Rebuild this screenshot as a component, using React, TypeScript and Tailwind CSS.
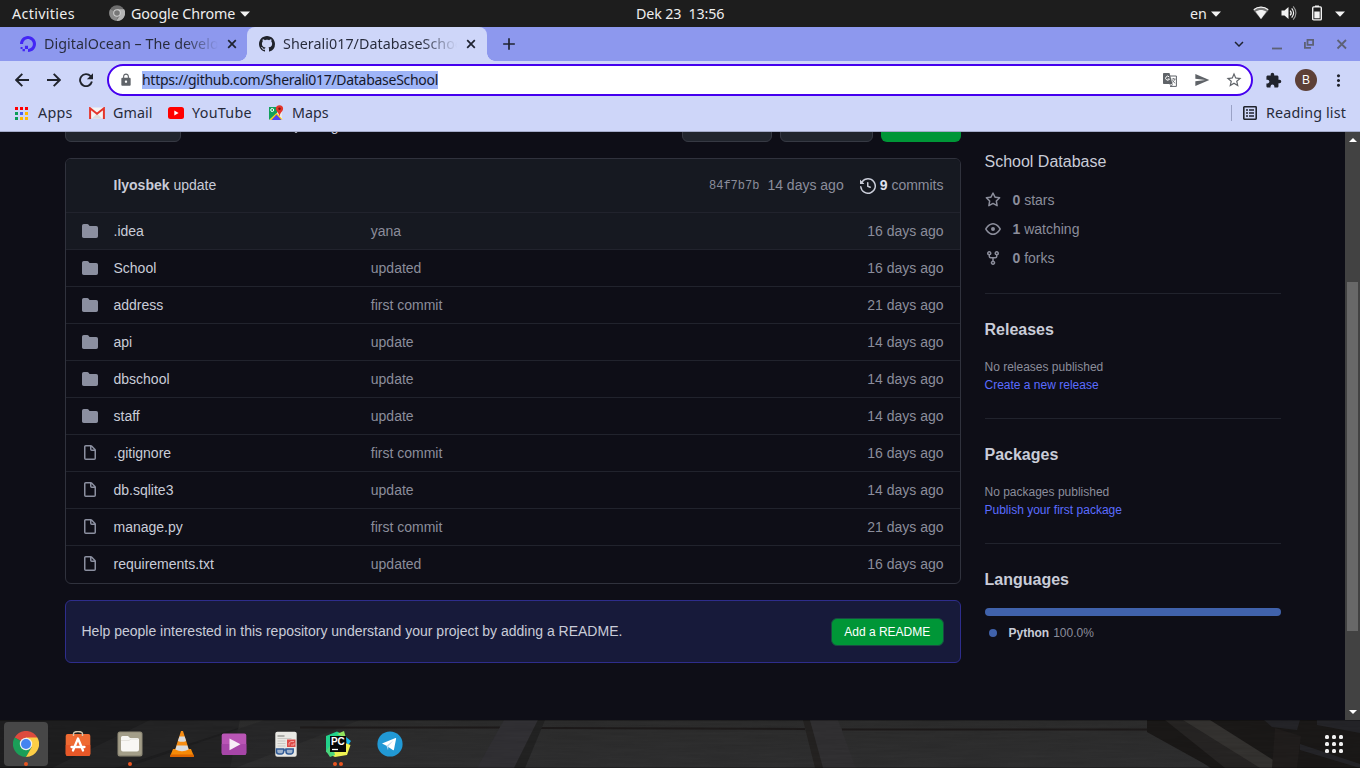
import type { ReactNode } from 'react';
import { MdAdd, MdExpandMore, MdExtension, MdLock, MdMoreVert, MdSend, MdStarBorder } from 'react-icons/md';
import { SiDigitalocean } from 'react-icons/si';

const octicons = {
  folder:
    'M1.75 1A1.75 1.75 0 000 2.75v10.5C0 14.216.784 15 1.75 15h12.5A1.75 1.75 0 0016 13.25v-8.5A1.75 1.75 0 0014.25 3h-6.5a.25.25 0 01-.2-.1l-.9-1.2c-.33-.44-.85-.7-1.4-.7h-3.5z',
  file: 'M3.75 1.5a.25.25 0 00-.25.25v11.5c0 .138.112.25.25.25h8.5a.25.25 0 00.25-.25V6H9.75A1.75 1.75 0 018 4.25V1.5H3.75zm5.75.56v2.19c0 .138.112.25.25.25h2.19L9.5 2.06zM2 1.75C2 .784 2.784 0 3.75 0h5.086c.464 0 .909.184 1.237.513l3.414 3.414c.329.328.513.773.513 1.237v8.086A1.75 1.75 0 0112.25 15h-8.5A1.75 1.75 0 012 13.25V1.75z',
  history:
    'M1.643 3.143L.427 1.927A.25.25 0 000 2.104V5.75c0 .138.112.25.25.25h3.646a.25.25 0 00.177-.427L2.715 4.215a6.5 6.5 0 11-1.18 4.458.75.75 0 10-1.493.154 8.001 8.001 0 101.6-5.684zM7.75 4a.75.75 0 01.75.75v2.992l2.028.812a.75.75 0 01-.557 1.392l-2.5-1A.75.75 0 017 8.25v-3.5A.75.75 0 017.75 4z',
  star: 'M8 .25a.75.75 0 01.673.418l1.882 3.815 4.21.612a.75.75 0 01.416 1.279l-3.046 2.97.719 4.192a.75.75 0 01-1.088.791L8 12.347l-3.766 1.98a.75.75 0 01-1.088-.79l.72-4.194L.818 6.374a.75.75 0 01.416-1.28l4.21-.611L7.327.668A.75.75 0 018 .25zm0 2.445L6.615 5.5a.75.75 0 01-.564.41l-3.097.45 2.24 2.184a.75.75 0 01.216.664l-.528 3.084 2.769-1.456a.75.75 0 01.698 0l2.77 1.456-.53-3.084a.75.75 0 01.216-.664l2.24-2.183-3.096-.45a.75.75 0 01-.564-.41L8 2.694v.001z',
  eye: 'M1.679 7.932c.412-.621 1.242-1.75 2.366-2.717C5.175 4.242 6.527 3.5 8 3.5c1.473 0 2.824.742 3.955 1.715 1.124.967 1.954 2.096 2.366 2.717a.119.119 0 010 .136c-.412.621-1.242 1.75-2.366 2.717C10.825 11.758 9.473 12.5 8 12.5c-1.473 0-2.824-.742-3.955-1.715C2.92 9.818 2.09 8.69 1.679 8.068a.119.119 0 010-.136zM8 2c-1.981 0-3.67.992-4.933 2.078C1.797 5.169.88 6.423.43 7.1a1.619 1.619 0 000 1.798c.45.678 1.367 1.932 2.637 3.024C4.329 13.008 6.019 14 8 14c1.981 0 3.67-.992 4.933-2.078 1.27-1.091 2.187-2.345 2.637-3.023a1.619 1.619 0 000-1.798c-.45-.678-1.367-1.932-2.637-3.023C11.671 2.992 9.981 2 8 2zm0 8a2 2 0 100-4 2 2 0 000 4z',
  fork: 'M5 3.25a.75.75 0 11-1.5 0 .75.75 0 011.5 0zm0 2.122a2.25 2.25 0 10-1.5 0v.878A2.25 2.25 0 005.75 8.5h1.5v2.128a2.251 2.251 0 101.5 0V8.5h1.5a2.25 2.25 0 002.25-2.25v-.878a2.25 2.25 0 10-1.5 0v.878a.75.75 0 01-.75.75h-4.5A.75.75 0 015 6.25v-.878zm3.75 7.378a.75.75 0 11-1.5 0 .75.75 0 011.5 0zm3-8.75a.75.75 0 100-1.5.75.75 0 000 1.5z',
  branch:
    'M11.75 2.5a.75.75 0 100 1.5.75.75 0 000-1.5zm-2.25.75a2.25 2.25 0 113 2.122V6A2.5 2.5 0 0110 8.5H6a1 1 0 00-1 1v1.128a2.251 2.251 0 11-1.5 0V5.372a2.25 2.25 0 111.5 0v1.836A2.492 2.492 0 016 7h4a1 1 0 001-1v-.628A2.25 2.25 0 019.5 3.25zM4.25 12a.75.75 0 100 1.5.75.75 0 000-1.5zM3.5 3.25a.75.75 0 111.5 0 .75.75 0 01-1.5 0z',
  tag: 'M2.5 7.775V2.75a.25.25 0 01.25-.25h5.025a.25.25 0 01.177.073l6.25 6.25a.25.25 0 010 .354l-5.025 5.025a.25.25 0 01-.354 0l-6.25-6.25a.25.25 0 01-.073-.177zm-1.5 0V2.75C1 1.784 1.784 1 2.75 1h5.025c.464 0 .91.184 1.238.513l6.25 6.25a1.75 1.75 0 010 2.474l-5.026 5.026a1.75 1.75 0 01-2.474 0l-6.25-6.25A1.75 1.75 0 011 7.775zM6 5a1 1 0 100 2 1 1 0 000-2z',
  mark: 'M8 0C3.58 0 0 3.58 0 8c0 3.54 2.29 6.53 5.47 7.59.4.07.55-.17.55-.38 0-.19-.01-.82-.01-1.49-2.01.37-2.53-.49-2.69-.94-.09-.23-.48-.94-.82-1.13-.28-.15-.68-.52-.01-.53.63-.01 1.08.58 1.23.82.72 1.21 1.87.87 2.33.66.07-.52.28-.87.51-1.07-1.78-.2-3.64-.89-3.64-3.95 0-.87.31-1.59.82-2.15-.08-.2-.36-1.02.08-2.12 0 0 .67-.21 2.2.82.64-.18 1.32-.27 2-.27.68 0 1.36.09 2 .27 1.53-1.04 2.2-.82 2.2-.82.44 1.1.16 1.92.08 2.12.51.56.82 1.27.82 2.15 0 3.07-1.87 3.75-3.65 3.95.29.25.54.73.54 1.48 0 1.07-.01 1.93-.01 2.2 0 .21.15.46.55.38A8.013 8.013 0 0016 8c0-4.42-3.58-8-8-8z',
};

function Octicon({ name, className = '' }: { name: keyof typeof octicons; className?: string }) {
  return (
    <svg viewBox="0 0 16 16" width="16" height="16" fill="currentColor" className={`shrink-0 ${className}`}>
      <path fillRule="evenodd" d={octicons[name]} />
    </svg>
  );
}

function Caret({ className = '' }: { className?: string }) {
  return (
    <svg viewBox="0 0 10 6" width="10" height="6" className={`shrink-0 ${className}`}>
      <path d="M0 .5h10L5 5.7z" fill="#f2f2f2" />
    </svg>
  );
}

function TopBar() {
  return (
    <div className="flex h-[27px] items-center bg-[#1d1d1d] pl-3 text-[14.3px] text-[#eeeeee]">
      <span className="w-[97px] whitespace-nowrap tracking-[0.33px]">Activities</span>
      <svg viewBox="0 0 16 16" width="16" height="16" className="-mt-px shrink-0">
        <circle cx="8" cy="8" r="7.8" fill="#6e6e6e" />
        <path d="M8 4.2h7.1A7.8 7.8 0 0 1 7.3 15.8L11.3 9.9z" fill="#b4b4b4" />
        <path d="M8 8 1.2 4.3A7.8 7.8 0 0 0 7.3 15.8L9 11z" fill="#8a8a8a" />
        <circle cx="8" cy="8" r="3.8" fill="#d0d0d0" />
        <circle cx="8" cy="8" r="2.8" fill="#777777" />
      </svg>
      <span className="ml-[6px] w-[109px] whitespace-nowrap tracking-[-0.1px]">Google Chrome</span>
      <Caret />
      <span className="ml-[386px] w-[554px] whitespace-pre tracking-[-0.15px]">Dek 23  13:56</span>
      <span className="w-[21px]">en</span>
      <Caret />
      <svg viewBox="0 0 16 14" width="16" height="14" className="-mt-px ml-8 shrink-0">
        <path d="M.3 3.9C4.700-.2 11.300-.2 15.700 3.900L8 13.200z" fill="#777" />
        <path d="M.8 3.700C5 .2 11 .2 15.200 3.700" fill="none" stroke="#f2f2f2" strokeWidth="1.300" />
        <path d="M2.600 5.600c3.400-2.200 7.400-2.200 10.800 0L8 13z" fill="#f2f2f2" />
      </svg>
      <svg viewBox="0 0 16 16" width="16" height="16" className="-mt-px ml-3 shrink-0">
        <path d="M.5 5.500h3L7.500 2v12l-4-3.500h-3z" fill="#f2f2f2" />
        <path d="M9.200 5.600q2 2.400 0 4.800" fill="none" stroke="#f2f2f2" strokeWidth="1.300" />
        <path d="M10.700 3.400q3.800 4.600 0 9.200" fill="none" stroke="#f2f2f2" strokeWidth="1.200" />
        <path d="M12.200 1.300q5.400 6.700 0 13.400" fill="none" stroke="#999" strokeWidth="1.100" />
      </svg>
      <svg viewBox="0 0 10 16" width="10" height="16" className="-mt-0.5 ml-[15px] shrink-0">
        <path d="M3 .5h4V2H3z" fill="#f2f2f2" />
        <rect x=".7" y="1.900" width="8.600" height="13" rx="1" fill="none" stroke="#f2f2f2" strokeWidth="1.400" />
        <path d="M2.300 6.500h5.400v6.800H2.300z" fill="#f2f2f2" />
      </svg>
      <Caret className="ml-[13px]" />
    </div>
  );
}

const tabLabel =
  'ml-2 w-[174px] overflow-hidden whitespace-nowrap bg-gradient-to-r from-[#272b3b] from-80% to-transparent bg-clip-text text-transparent';

function CloseIcon() {
  return (
    <svg viewBox="0 0 14 14" width="14" height="14" className="ml-[7px] shrink-0">
      <path d="m3.200 3.200 7.600 7.600M10.800 3.200l-7.600 7.600" stroke="#1f2330" strokeWidth="1.700" />
    </svg>
  );
}

function TabStrip() {
  return (
    <div className="flex h-[34px] items-center bg-[#8d98ee] text-[14.3px] text-[#1f2330]">
      <div className="flex w-[239px] items-center pl-5">
        <SiDigitalocean size={16} color="#4326f5" className="shrink-0" />
        <span className={`${tabLabel} tracking-[0.03px]`}>DigitalOcean – The developer cloud</span>
        <CloseIcon />
      </div>
      <div className="h-2 w-2 self-end bg-[radial-gradient(circle_at_0_0,#8d98ee_7.5px,#ced6f9_8px)]" />
      <div className="flex h-full w-[240px] items-center rounded-t-lg bg-[#ced6f9] pl-3">
        <Octicon name="mark" className="text-[#20232c]" />
        <span className={`${tabLabel} tracking-[0.03px]`}>Sherali017/DatabaseSchool</span>
        <CloseIcon />
      </div>
      <div className="h-2 w-2 self-end bg-[radial-gradient(circle_at_100%_0,#8d98ee_7.5px,#ced6f9_8px)]" />
      <MdAdd size={20} className="ml-1 shrink-0" />
      <MdExpandMore size={18} className="ml-auto mr-[22px] shrink-0" />
      <svg
        viewBox="0 0 78 14"
        width="78"
        height="14"
        fill="none"
        stroke="#5d6175"
        strokeWidth="1.800"
        className="mr-3 shrink-0"
      >
        <path d="M2 11.500h10" />
        <path d="M37.500 2.900h5.600v5H37.500z" />
        <path d="M34.900 5v5.800h6" />
        <path d="m67.500 3 8.500 8.500M76 3l-8.500 8.500" />
      </svg>
    </div>
  );
}

function TranslateIcon() {
  return (
    <svg viewBox="0 0 14 14" width="14" height="14" className="ml-auto shrink-0">
      <path d="M7 3h6.400v10.400H7" fill="none" stroke="#5f6368" strokeWidth="1" />
      <path d="M0 .8A.8.8 0 0 1 .8 0h5.700l3 11H.8a.8.8 0 0 1-.8-.8z" fill="#5f6368" />
      <path d="M6.200 3.900A2 2 0 1 0 6.500 6H4.700" fill="none" stroke="#fff" strokeWidth="1" />
      <path
        d="M8.600 6h4M10.600 5v1M12 6q-.6 2-2.600 3.400M9.200 7.200q1 1.800 3 3M6.800 11l1.600 2.400 1-2.400"
        fill="none"
        stroke="#5f6368"
        strokeWidth=".8"
      />
    </svg>
  );
}

function NavIcons() {
  return (
    <div className="flex gap-[18px] pl-[3px]">
      <svg viewBox="0 0 14 14" width="14" height="14" fill="none" stroke="#20232c" strokeWidth="1.900">
        <path d="M14 7H1.500M7.300.8 1.200 7l6.100 6.200" />
      </svg>
      <svg viewBox="0 0 14 14" width="14" height="14" fill="none" stroke="#20232c" strokeWidth="1.900">
        <path d="M0 7h12.500M6.700.8 12.800 7l-6.100 6.200" />
      </svg>
      <svg viewBox="0 0 14 14" width="14" height="14">
        <path d="M11.600 3.200A6 6 0 1 0 12.900 8.600" fill="none" stroke="#20232c" strokeWidth="1.900" />
        <path d="M14 .2v6.100H7.900z" fill="#20232c" />
      </svg>
    </div>
  );
}

function Toolbar() {
  return (
    <div className="flex h-[38px] items-center bg-[#ced6f9] pl-3 text-[#20232c]">
      <NavIcons />
      <div className="ml-[14px] flex h-8 w-[1146px] shrink-0 items-center rounded-full border-2 border-[#4500ef] bg-white pl-[10px] pr-2 text-[#5f6368]">
        <MdLock size={14} className="shrink-0" />
        <span className="ml-[9px] h-[18px] w-[296px] whitespace-nowrap bg-[#9fb5f8] text-[14px] leading-[18px] tracking-[-0.28px] text-[#15182a]">
          https://github.com/Sherali017/DatabaseSchool
        </span>
        <TranslateIcon />
        <MdSend size={16} className="ml-[17px] shrink-0" />
        <MdStarBorder size={18} className="ml-[15px] shrink-0" />
      </div>
      <MdExtension size={17} className="ml-3 shrink-0" />
      <div className="ml-[13px] flex h-[22px] w-[22px] shrink-0 items-center justify-center rounded-full bg-[#5d4037] font-['Liberation_Sans',sans-serif] text-[12px] text-white">
        B
      </div>
      <MdMoreVert size={19} className="ml-3 shrink-0" />
    </div>
  );
}

const gridColors = ['#f00', '#f00', '#f00', '#0a9d58', '#4a60f5', '#fb0', '#0a9d58', '#fb0', '#fb0'];

function Bookmarks() {
  return (
    <div className="flex h-[33px] items-center border-b border-[#a4abc9] bg-[#ced6f9] pb-1 pl-[15px] text-[14.3px] text-[#272b3b]">
      <div className="grid w-[13px] grid-cols-3 gap-[2px]">
        {gridColors.map((c, i) => (
          <i key={i} className="h-[3px] w-[3px]" style={{ background: c }} />
        ))}
      </div>
      <span className="ml-[10px] w-[51px] tracking-[0.3px]">Apps</span>
      <svg viewBox="0 0 16 12" width="16" height="12" className="shrink-0">
        <path d="M1 .5h14v11H1z" fill="#f4f4f4" />
        <path d="m3 11.500 5-5 5 5z" fill="#ddd" />
        <path d="M1.100 12V1.300L8 6.700l6.900-5.400V12" fill="none" stroke="#e5352a" strokeWidth="2" />
      </svg>
      <span className="ml-2 w-[55px] tracking-[0.05px]">Gmail</span>
      <svg viewBox="0 0 16 12" width="16" height="12" className="shrink-0">
        <rect width="16" height="12" rx="2.500" fill="#f00" />
        <path d="M6.300 3.500v5L10.600 6z" fill="#fff" />
      </svg>
      <span className="ml-2 w-[76px] tracking-[0.3px]">YouTube</span>
      <svg viewBox="0 0 16 16" width="16" height="16" className="shrink-0">
        <path d="M1 2h13v13H1z" fill="#e9e9ef" />
        <path d="M1 2h10L9 8l-8 7z" fill="#13a05d" />
        <path d="m1.500 15 7-7 6 6.500z" fill="#fc0" />
        <path d="m3.500 15 5-5.500 5 5.500z" fill="#5244f0" />
        <circle cx="4.200" cy="5" r="1.500" fill="none" stroke="#fff" />
        <path
          d="M11.500.2a3.600 3.600 0 0 1 3.600 3.600c0 2.400-3 3.600-3.400 7.200h-.4C11 7.400 7.900 6.200 7.900 3.800A3.600 3.600 0 0 1 11.500.2z"
          fill="#e5352a"
        />
        <circle cx="11.500" cy="3.700" r="1.200" fill="#7c1510" />
      </svg>
      <span className="ml-2">Maps</span>
      <div className="ml-auto h-4 w-px bg-[#9aa2c6]" />
      <svg viewBox="0 0 14 14" width="14" height="14" className="ml-[11px] shrink-0">
        <rect x=".8" y=".8" width="12.400" height="12.400" rx=".6" fill="none" stroke="#20232c" strokeWidth="1.600" />
        <path d="M3 4h2m1 0h5M3 7h2m1 0h5M3 10h2m1 0h5" stroke="#20232c" strokeWidth="1.500" />
      </svg>
      <span className="ml-[9px] mr-[14px] w-[80px] whitespace-nowrap tracking-[0.15px]">Reading list</span>
    </div>
  );
}

const files: [keyof typeof octicons, string, string, string][] = [
  ['folder', '.idea', 'yana', '16 days ago'],
  ['folder', 'School', 'updated', '16 days ago'],
  ['folder', 'address', 'first commit', '21 days ago'],
  ['folder', 'api', 'update', '14 days ago'],
  ['folder', 'dbschool', 'update', '14 days ago'],
  ['folder', 'staff', 'update', '14 days ago'],
  ['file', '.gitignore', 'first commit', '16 days ago'],
  ['file', 'db.sqlite3', 'update', '14 days ago'],
  ['file', 'manage.py', 'first commit', '21 days ago'],
  ['file', 'requirements.txt', 'updated', '16 days ago'],
];

function FileTable() {
  return (
    <div className="mt-4 overflow-hidden rounded-md border border-[#30323d]">
      <div className="flex h-[53px] items-center bg-[#161921] pl-[47.5px] pr-[16.5px] text-[#8b8d9b]">
        <span className="text-[#c9ccd8]">
          <b>Ilyosbek</b> update
        </span>
        <span className="ml-auto pt-px font-['Liberation_Mono'] text-[12px]">84f7b7b</span>
        <span className="ml-2">14 days ago</span>
        <Octicon name="history" className="ml-4 text-[#c9ccd8]" />
        <span className="ml-1">
          <b className="text-[#dfe1ee]">9</b> commits
        </span>
      </div>
      {files.map(([icon, name, message, age], i) => (
        <div
          key={name}
          className={`flex h-[37px] items-center border-t border-[#21232d] pl-4 pr-[16.5px] last:h-[38px] last:pb-px ${i === 0 ? 'bg-[#161921]' : ''}`}
        >
          <Octicon name={icon} className="text-[#8b8fa0]" />
          <span className="ml-[15.5px] w-[257.3px] text-[#c9ccd8]">{name}</span>
          <span className="text-[#8b8d9b]">{message}</span>
          <span className="ml-auto text-[#8b8d9b]">{age}</span>
        </div>
      ))}
    </div>
  );
}

const greyButton = 'flex h-8 items-center rounded-md border border-[#363943] bg-[#21252d]';

function Main() {
  return (
    <div className="w-[896px]">
      <div className="flex h-8 items-center text-[#c9ccd8]">
        <div className={`${greyButton} w-[116px] pl-4`}>
          <Octicon name="branch" className="-mt-0.5" />
        </div>
        <Octicon name="branch" className="-mt-0.5 ml-4" />
        <Octicon name="tag" className="-mt-0.5 ml-[74px]" />
        <span className="ml-4">tags</span>
        <div className={`${greyButton} ml-auto w-[90px]`} />
        <div className={`${greyButton} ml-2 w-[93px]`} />
        <div className="ml-2 h-8 w-[80px] rounded-md bg-[#009637]" />
      </div>
      <FileTable />
      <div className="mt-4 flex h-[63px] items-center justify-between rounded-md border border-[#2e2d8c] bg-[#171a3a] pl-[15.5px] pr-[16.5px] text-[#c9ccd8]">
        <span>Help people interested in this repository understand your project by adding a README.</span>
        <button className="h-7 w-[112.5px] rounded-md border border-[#1b4a44] bg-[#009637] pt-px text-[12px] text-white">
          Add a README
        </button>
      </div>
    </div>
  );
}

function SideSection({ title, children }: { title: string; children: ReactNode }) {
  return (
    <div className="h-[125px] border-t border-[#21232d] pt-6">
      <h2 className="text-[16px] font-bold leading-6 text-[#c9ccd8]">{title}</h2>
      {children}
    </div>
  );
}

function Sidebar() {
  const stats: [keyof typeof octicons, string, string][] = [
    ['star', '0', 'stars'],
    ['eye', '1', 'watching'],
    ['fork', '0', 'forks'],
  ];
  return (
    <div className="ml-[23.5px] mt-10 w-[296px] text-[12px] text-[#8b8d9b]">
      <p className="text-[16px] leading-6 text-[#c9ccd8]">School Database</p>
      <div className="mb-6 mt-4 flex flex-col gap-2 text-[14px] leading-[21px]">
        {stats.map(([icon, count, label]) => (
          <div key={label} className="flex items-center">
            <Octicon name={icon} className="-mt-px mr-3" />
            <span>
              <b>{count}</b> {label}
            </span>
          </div>
        ))}
      </div>
      <SideSection title="Releases">
        <p className="mt-4 leading-[18px]">No releases published</p>
        <p className="leading-[18px] text-[#5b6cff]">Create a new release</p>
      </SideSection>
      <SideSection title="Packages">
        <p className="mt-4 leading-[18px]">No packages published</p>
        <p className="leading-[18px] text-[#5b6cff]">Publish your first package</p>
      </SideSection>
      <SideSection title="Languages">
        <div className="mt-4 h-2 rounded-md bg-[#4062ab]" />
        <p className="mt-2 flex items-center leading-[18px]">
          <i className="ml-1 mr-[12px] h-2 w-2 rounded-full bg-[#4062ab]" />
          <b className="mr-1 text-[#c9ccd8]">Python</b>100.0%
        </p>
      </SideSection>
    </div>
  );
}

function Scrollbar() {
  return (
    <div className="ml-auto flex h-full w-[15px] flex-col items-center bg-[#424242]">
      <svg viewBox="0 0 8 4" width="8" height="4" className="mt-1.5 shrink-0">
        <path d="M0 4h8L4 0z" fill="#fff" />
      </svg>
      <div className="mt-[140px] h-[349px] w-[11px] bg-[#686868]" />
      <svg viewBox="0 0 8 4" width="8" height="4" className="mb-1.5 mt-auto shrink-0">
        <path d="M0 0h8L4 4z" fill="#fff" />
      </svg>
    </div>
  );
}

function Wallpaper() {
  return (
    <svg viewBox="0 0 1360 48" width="1360" height="48" className="absolute inset-0">
      <defs>
        <filter id="grain" x="0" y="0" width="100%" height="100%">
          <feTurbulence type="fractalNoise" baseFrequency=".02 .4" numOctaves="3" seed="4" />
          <feColorMatrix values="0 0 0 0 0  0 0 0 0 0  0 0 0 0 0  .6 0 0 0 -.1" />
        </filter>
        <linearGradient id="wood" x1="0" x2="0" y1="0" y2="1">
          <stop stopColor="#2d2d2d" />
          <stop offset="1" stopColor="#303031" />
        </linearGradient>
      </defs>
      <path fill="#1f1f20" d="M0 0h1360v48H0z" />
      <path fill="#2a2a2b" d="M150 0h35L90 48H52zM185 0h80l-40 12-110 36H90z" opacity=".6" />
      <path fill="url(#wood)" d="M240 0h910l60 48H230z" />
      <path fill="#272728" d="M265 0 125 48h110l125-48z" opacity=".7" />
      <path fill="#1e1b1b" d="M300 6.500h200v2H300zM540 7l265 1v2l-265-1zM842 8.500h305v2H842z" />
      <path fill="#323135" d="M504 0h34l-24 48h-37z" />
      <path fill="#232323" d="m538 0 7 0-20 48h-11z" />
      <path fill="#252322" d="M803 0h7l14 48h-9z" />
      <path fill="#323133" d="M810 0h28l18 48h-33z" />
      <path fill="#1b1918" d="M1147 0h213v48h-148l-65-36z" />
      <path fill="#272524" d="m1165 0 20 0 90 48h-50z" />
      <path fill="#353331" d="M1183 0h27l76 48h-26z" />
      <path fill="#292b30" d="M1264 0h36l-3 10-25-3zM1317 0h43v13l-43-8zM1300 24l60 20v4l-60-18z" opacity=".7" />
      <path fill="#211e1d" d="m1275 8 26 8-4 32h-25z" />
      <rect width="1360" height="48" filter="url(#grain)" opacity=".22" />
      <path fill="#000" d="M0 0h1360v1H0zM0 47h1360v1H0z" opacity=".25" />
    </svg>
  );
}

const dockApps: { name: string; dots: number; art: ReactNode }[] = [
  {
    name: 'chrome',
    dots: 1,
    art: (
      <>
        <path d="M13 13 1.700 6.500a13 13 0 0 1 22.600 0z" fill="#dd4b3e" />
        <path d="M13 13 1.700 6.500A13 13 0 0 0 13 26l5.600-9.800z" fill="#1b9e58" />
        <path d="M13 13V6.500h11.300A13 13 0 0 1 13 26l5.600-9.800z" fill="#fdce46" />
        <circle cx="13" cy="13" r="6.200" fill="#f1f1f1" />
        <circle cx="13" cy="13" r="5" fill="#4584f0" />
      </>
    ),
  },
  {
    name: 'software',
    dots: 0,
    art: (
      <>
        <rect x=".7" y="3" width="24.600" height="22" rx="2" fill="#ef6a32" />
        <path d="M.7 14h24.600v9a2 2 0 0 1-2 2H2.700a2 2 0 0 1-2-2z" fill="#e85828" />
        <path d="M8.500 5V2.800Q8.500.5 13 .5t4.500 2.300V5" fill="none" stroke="#d6c9ae" strokeWidth="1.400" />
        <path
          d="m8 19.500 5-12 5 12M6.500 16h13"
          fill="none"
          stroke="#fff"
          strokeWidth="2.300"
          strokeLinecap="round"
          strokeLinejoin="round"
        />
      </>
    ),
  },
  {
    name: 'files',
    dots: 1,
    art: (
      <>
        <rect x=".5" y=".5" width="25" height="25" rx="2.500" fill="#8e8976" />
        <rect x="1.500" y="1.500" width="23" height="22.500" rx="2" fill="#a39e89" />
        <path
          d="M4 6.500A1.500 1.500 0 0 1 5.500 5h5.500l2 2h7.500A1.500 1.500 0 0 1 22 8.500v10a2 2 0 0 1-2 2H6a2 2 0 0 1-2-2z"
          fill="#f8f7f4"
        />
        <path d="M4 9.500h8l2-1.500h7" fill="none" stroke="#dcdad2" strokeWidth=".7" />
      </>
    ),
  },
  {
    name: 'vlc',
    dots: 0,
    art: (
      <>
        <path d="M4 18h18l3 7.500H1z" fill="#f58a07" />
        <path d="M1.500 23.500h23l.5 2.500H1z" fill="#dc6500" />
        <path d="M12 0h2l6 19q-7 4.500-14 0z" fill="#f78d13" />
        <path d="m10.400 5.500 5.300 0 1.400 4.500q-4 1.700-8.200 0zM7.700 14.500h10.700l1.200 4q-6.600 3.500-13.200 0z" fill="#d8dbdf" />
      </>
    ),
  },
  {
    name: 'player',
    dots: 0,
    art: (
      <>
        <rect x=".7" y="2.500" width="24.600" height="21.500" rx="2" fill="#b955b5" />
        <path d="M.7 13h24.600v9a2 2 0 0 1-2 2H2.700a2 2 0 0 1-2-2z" fill="#a746a8" />
        <path d="m8.500 7.500 11 5.700-11 6z" fill="#f7edf7" />
      </>
    ),
  },
  {
    name: 'reader',
    dots: 0,
    art: (
      <>
        <rect x="2.300" y=".7" width="21.400" height="25" rx="2" fill="#e9e8e4" />
        <path d="M4.500 5h7" stroke="#8f8e8a" strokeWidth="1.300" />
        <path d="M4.500 7.500h14M4.500 10h8M4.500 12.500h8M4.500 15h8" stroke="#c9c8c4" strokeWidth="1" />
        <path d="M14 8.500h8.500V16H14z" fill="#dd4b48" />
        <path d="M16 14.500V12l2-1.500h3M18 14h3v-2" fill="none" stroke="#f6b9b5" strokeWidth=".8" />
        <path
          d="M3.500 18h7.200v2.500a2.500 2.500 0 0 1-2.500 2.500H6a2.500 2.500 0 0 1-2.500-2.500zM13 18h7.200v2.500a2.500 2.500 0 0 1-2.500 2.500h-2.200a2.500 2.500 0 0 1-2.500-2.500z"
          fill="#9fb2cb"
          stroke="#315b96"
          strokeWidth="1.500"
        />
        <path d="M10.500 19h3" stroke="#315b96" strokeWidth="1.500" />
      </>
    ),
  },
  {
    name: 'pycharm',
    dots: 2,
    art: (
      <>
        <path d="M1 5 12 .5l8 4L8 24l-7-3z" fill="#22d18b" />
        <path d="m12 3 7-3 2 7z" fill="#91e35c" />
        <path d="m21 6 5 4-4 6z" fill="#12b8ee" />
        <path d="m4 23 6 3 12-2 3.500-10L20 12z" fill="#eef152" />
        <path d="M1 20 7 12l3 12-5 2z" fill="#4bd47b" />
        <rect x="5" y="5" width="16" height="16" fill="#070707" />
        <path d="M7 18.500h6" stroke="#fff" strokeWidth="1.300" />
        <text x="5.900" y="14" fontSize="10" fontWeight="bold" fontFamily="Liberation Sans, sans-serif" fill="#fff">
          PC
        </text>
      </>
    ),
  },
  {
    name: 'telegram',
    dots: 0,
    art: (
      <>
        <circle cx="13" cy="13" r="12.600" fill="#2199d5" />
        <path d="M5 12.600 18.500 7q.8-.2.600.8L17 18.500q-.3 1-1.200.4L9.500 14.700z" fill="#fff" />
        <path d="m9.500 14.700 7-5.500-5 6-.5 4z" fill="#bcdcf0" />
      </>
    ),
  },
];

function Dock() {
  return (
    <div className="relative flex h-12 overflow-hidden bg-[#222]">
      <Wallpaper />
      <div className="relative flex w-full items-center">
        {dockApps.map((app, i) => (
          <div key={app.name} className="flex h-12 w-[52px] items-center justify-center">
            <div className={`flex h-11 w-11 flex-col items-center rounded pt-[9px] ${i === 0 ? 'bg-[#474747]' : ''}`}>
              <svg viewBox="0 0 26 26" width="26" height="26" className="shrink-0">
                {app.art}
              </svg>
              <div className="mt-[5px] flex gap-[2px]">
                {Array.from({ length: app.dots }, (_, d) => (
                  <i key={d} className="h-1 w-1 rounded-full bg-[#e95420]" />
                ))}
              </div>
            </div>
          </div>
        ))}
        <div className="ml-auto mr-[17px] grid grid-cols-3 gap-[3px]">
          {Array.from({ length: 9 }, (_, d) => (
            <i key={d} className="h-1 w-1 rounded-[1.5px] bg-[#f0f0f0]" />
          ))}
        </div>
      </div>
    </div>
  );
}

export default function App() {
  return (
    <div className="flex h-[768px] w-[1360px] flex-col overflow-hidden font-['Noto_Sans',sans-serif]">
      <TopBar />
      <TabStrip />
      <Toolbar />
      <Bookmarks />
      <div className="flex h-[588px] overflow-hidden bg-[#0e0e17] font-['Liberation_Sans',sans-serif] text-[14px] leading-[21px]">
        <div className="-mt-[22px] flex pl-[65px]">
          <Main />
          <Sidebar />
        </div>
        <Scrollbar />
      </div>
      <Dock />
    </div>
  );
}
